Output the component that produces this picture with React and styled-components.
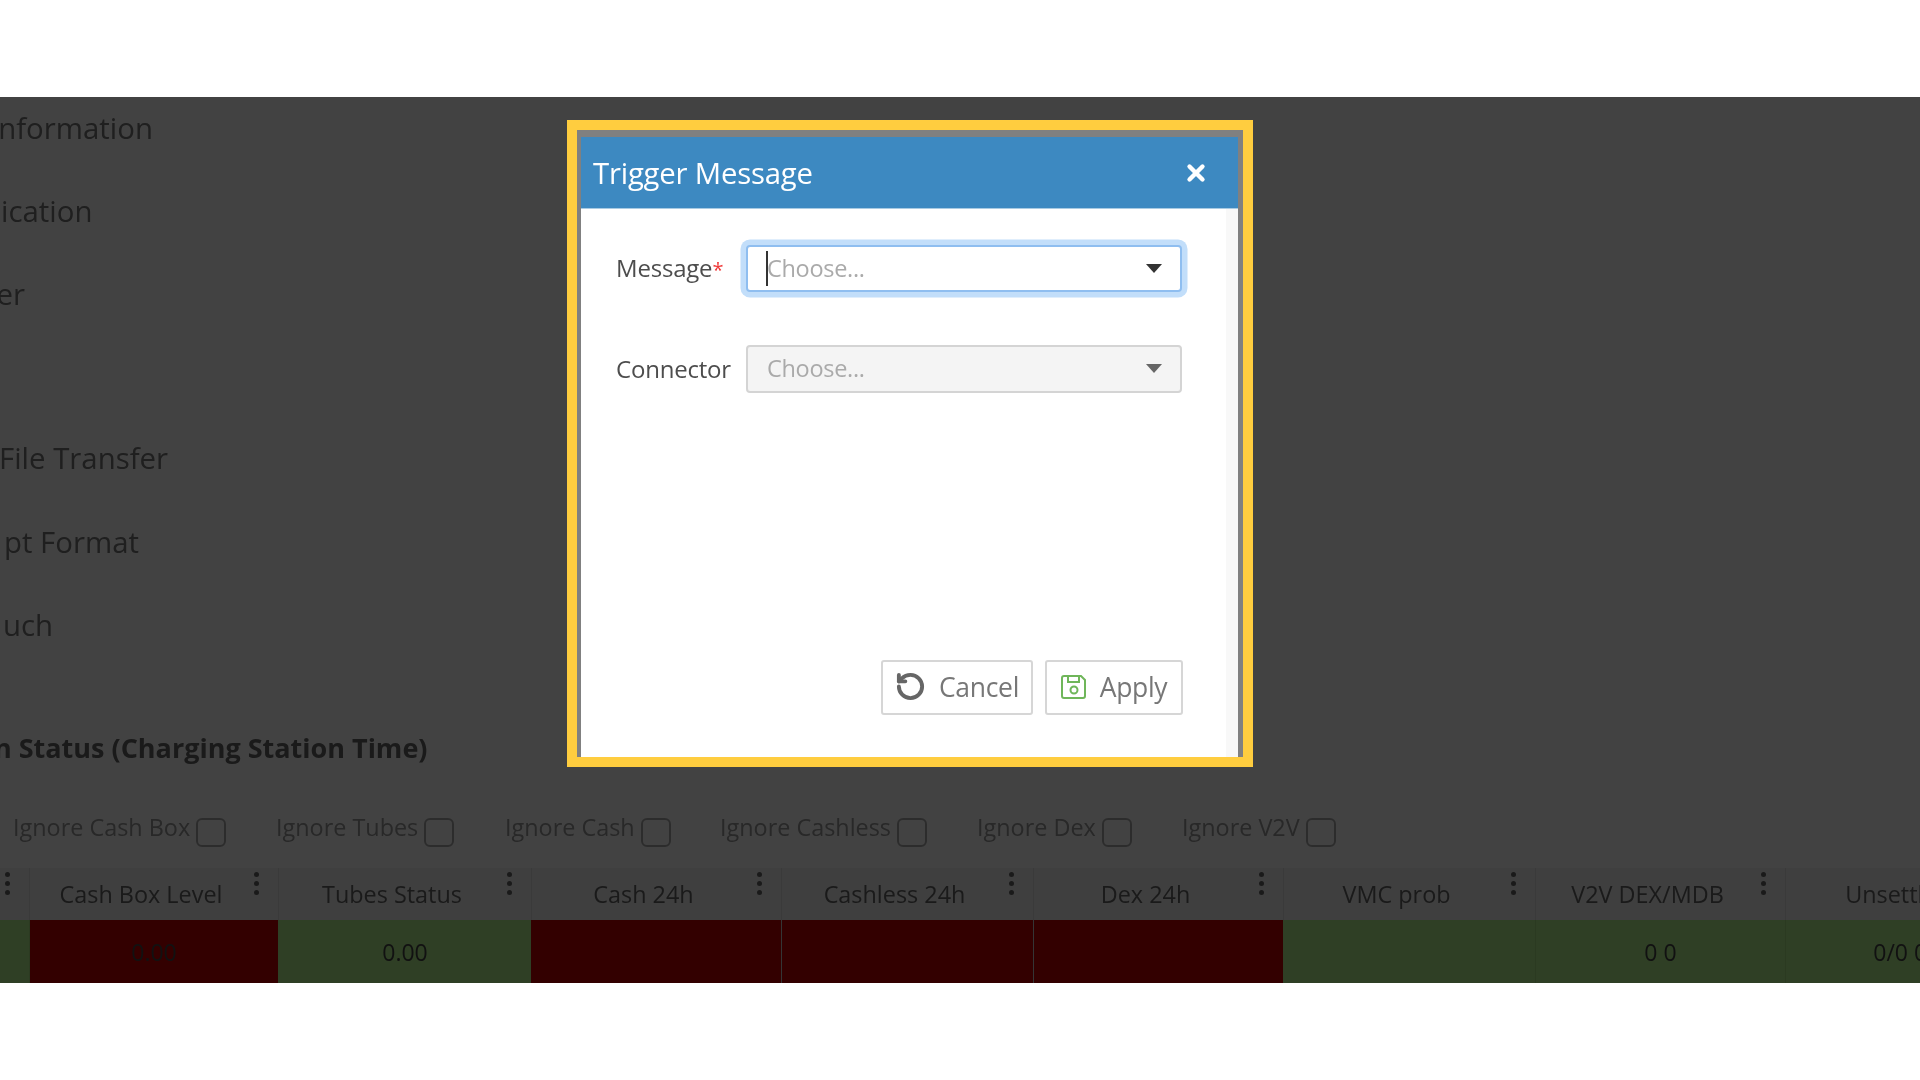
import React from "react";
import styled, { createGlobalStyle } from "styled-components";
import { RotateCcw, X } from "lucide-react";

const Global = createGlobalStyle`
  html, body { margin: 0; padding: 0; background: #fff; }
  body { font-family: "Open Sans", "Noto Sans", sans-serif; overflow: hidden; }
  #root { height: 1080px; }
`;
const Page = styled.div`display:flex;flex-direction:column;height:1080px;width:1920px;overflow:hidden;filter:blur(.45px);`;
const TopGap = styled.div`height:97px;flex:none;background:#fff;`;
const BottomGap = styled.div`flex:1;background:#fff;`;
const Frame = styled.div`position:relative;height:886px;flex:none;overflow:hidden;background:#fff;`;
const Backdrop = styled.div`position:absolute;inset:0;background:rgba(0,0,0,.74);`;
const Content = styled.div`display:flex;flex-direction:column;width:1920px;`;
const Menu = styled.ul`list-style:none;margin:-11px 0 0;padding:0;display:flex;flex-direction:column;`;
const MenuItem = styled.li`display:flex;align-items:center;height:${p => p.$h}px;font-size:29.4px;color:#777;white-space:nowrap;margin-left:${p => p.$shift}px;`;
const Heading = styled.h2`margin:61.6px 0 0;height:40px;line-height:40px;font-size:27px;font-weight:700;color:#666;white-space:nowrap;margin-left:${p => p.$shift}px;`;
const Filters = styled.div`display:flex;margin-top:50px;height:50px;padding-left:13px;`;
const Filter = styled.label`display:flex;align-items:flex-start;gap:6px;font-size:23.4px;line-height:18px;color:#999;white-space:nowrap;width:${p => p.$w}px;`;
const Box = styled.span`display:block;flex:none;width:30px;height:29px;border:2px solid #888;border-radius:6px;box-sizing:border-box;opacity:.7;`;
const Grid = styled.div`display:grid;grid-template-columns:30px 249px 253px 250px 252px 250px 252px 250px 251px;width:2037px;`;
const Head = styled.div`position:relative;height:52px;box-sizing:border-box;background:#f2f2f2;border-right:1px solid #e0e0e0;display:flex;align-items:center;justify-content:center;padding:0 26px 0 0;font-size:23.4px;color:#666;white-space:nowrap;overflow:hidden;`;
const Kebab = styled.span`position:absolute;right:19.5px;top:4px;display:flex;flex-direction:column;gap:4px;& i{display:block;width:5px;height:5px;border-radius:50%;background:#666;}`;
const Cell = styled.div`height:63px;box-sizing:border-box;background:${p => p.$bad ? "#c40000" : "#b5f28e"};border-right:1px solid ${p => p.$edge};display:flex;align-items:center;justify-content:center;font-size:23px;color:#444;white-space:nowrap;overflow:hidden;`;

const Modal = styled.div`position:absolute;left:567px;top:23px;width:686px;height:647px;box-sizing:border-box;border:10px solid #ffcd3f;display:flex;flex-direction:column;background:#fff;`;
const Dialog = styled.div`flex:1;display:flex;flex-direction:column;border-style:solid;border-color:#808080;border-width:7px 5px 0 4px;min-height:0;`;
const DialogHead = styled.div`height:72px;flex:none;box-sizing:border-box;background:#3d89c1;border-bottom:1px solid #a9cbe3;display:flex;align-items:center;justify-content:space-between;padding:2px 29px 0 12px;color:#fff;`;
const Title = styled.div`font-size:29.3px;letter-spacing:-.2px;line-height:1;`;
const Close = styled.button`border:0;background:none;padding:0 0 2px;color:#fff;display:flex;`;
const Body = styled.div`flex:1;display:flex;flex-direction:column;padding:36px 43px 42px 35px;border-right:12px solid #f8f8f8;`;
const Row = styled.div`display:flex;align-items:center;height:${p => p.$h}px;margin-bottom:53px;`;
const Label = styled.label`width:130px;flex:none;font-size:24px;letter-spacing:-.2px;color:#4d4d4d;padding-bottom:2px;& b{color:#f03a3a;font-weight:400;font-size:20px;}`;
const Select = styled.div`position:relative;width:436px;height:100%;box-sizing:border-box;border-radius:4px;display:flex;align-items:center;padding:0 0 2px 19px;font-size:23.5px;letter-spacing:-.3px;color:#aaa;
  border:2px solid ${p => p.$focus ? "#8fbef0" : "#d4d4d4"};
  background:${p => p.$focus ? "#fff" : "#f4f4f4"};
  box-shadow:${p => p.$focus ? "0 0 0 5.5px #c2defa" : "none"};`;
const Caret = styled.span`position:absolute;left:18px;top:4px;bottom:4px;width:2px;background:#333;`;
const Arrow = styled.span`position:absolute;right:18px;top:50%;margin-top:-5px;width:0;height:0;border-left:8px solid transparent;border-right:8px solid transparent;border-top:9px solid ${p => p.$dim ? "#666" : "#333"};`;
const Footer = styled.div`margin-top:auto;display:flex;justify-content:flex-end;gap:12px;`;
const Button = styled.button`height:55px;width:${p => p.$w}px;box-sizing:border-box;background:#fff;border:2px solid #d6d6d6;border-radius:3px;display:flex;align-items:center;justify-content:center;gap:13px;font-family:inherit;font-size:26.5px;line-height:30px;letter-spacing:-.3px;color:#777;padding:0 0 2px;`;

const columns = [
  ["", "", false, "#a8e080"],
  ["Cash Box Level", "0.00", true, "#b5f28e"],
  ["Tubes Status", "0.00", false, "#c40000"],
  ["Cash 24h", "", true, "#ccc"],
  ["Cashless 24h", "", true, "#ccc"],
  ["Dex 24h", "", true, "#b5f28e"],
  ["VMC prob", "", false, "#a8e080"],
  ["V2V DEX/MDB", "0 0", false, "#a8e080"],
  ["Unsettled", "0/0 0/0", false, "#a8e080"],
];
const filters = [["Ignore Cash Box", 263], ["Ignore Tubes", 229], ["Ignore Cash", 215], ["Ignore Cashless", 257], ["Ignore Dex", 205], ["Ignore V2V", 180]];
const menu = [
  ["Information", -10, 83.4], ["ication", 1, 83.4], ["Buzzer", -68, 83.4], ["", 0, 80],
  ["File Transfer", -1, 84], ["pt Format", 4, 83], ["uch", 3, 83.4],
];

const SaveIcon = () => (
  <svg width="26" height="26" viewBox="0 0 26 26" fill="none" stroke="#6fb65a" strokeWidth="2">
    <path d="M3 2h17l4 4v16a2 2 0 0 1-2 2H3a2 2 0 0 1-2-2V4a2 2 0 0 1 2-2z" />
    <path d="M7 2v6h11V2" />
    <circle cx="13" cy="16" r="3.5" />
  </svg>
);

export default function App() {
  return (
    <Page>
      <Global />
      <TopGap />
      <Frame>
        <Content>
          <Menu>
            {menu.map(([t, s, h], i) => <MenuItem key={i} $shift={s} $h={h}>{t}</MenuItem>)}
          </Menu>
          <Heading $shift={-142}>Connection Status (Charging Station Time)</Heading>
          <Filters>
            {filters.map(([t, w]) => <Filter key={t} $w={w}>{t}<Box /></Filter>)}
          </Filters>
          <Grid>
            {columns.map(([h], i) => (
              <Head key={i}>{h}<Kebab><i /><i /><i /></Kebab></Head>
            ))}
            {columns.map(([, v, bad, edge], i) => <Cell key={i} $bad={bad} $edge={edge}>{v}</Cell>)}
          </Grid>
        </Content>
        <Backdrop />
        <Modal>
          <Dialog>
            <DialogHead>
              <Title>Trigger Message</Title>
              <Close><X size={26} strokeWidth={4} /></Close>
            </DialogHead>
            <Body>
              <Row $h={47}>
                <Label>Message<b>*</b></Label>
                <Select $focus>Choose...<Caret /><Arrow /></Select>
              </Row>
              <Row $h={48}>
                <Label>Connector</Label>
                <Select>Choose...<Arrow $dim /></Select>
              </Row>
              <Footer>
                <Button $w={152}><RotateCcw size={31} strokeWidth={3} color="#666" />Cancel</Button>
                <Button $w={138}><SaveIcon />Apply</Button>
              </Footer>
            </Body>
          </Dialog>
        </Modal>
      </Frame>
      <BottomGap />
    </Page>
  );
}
